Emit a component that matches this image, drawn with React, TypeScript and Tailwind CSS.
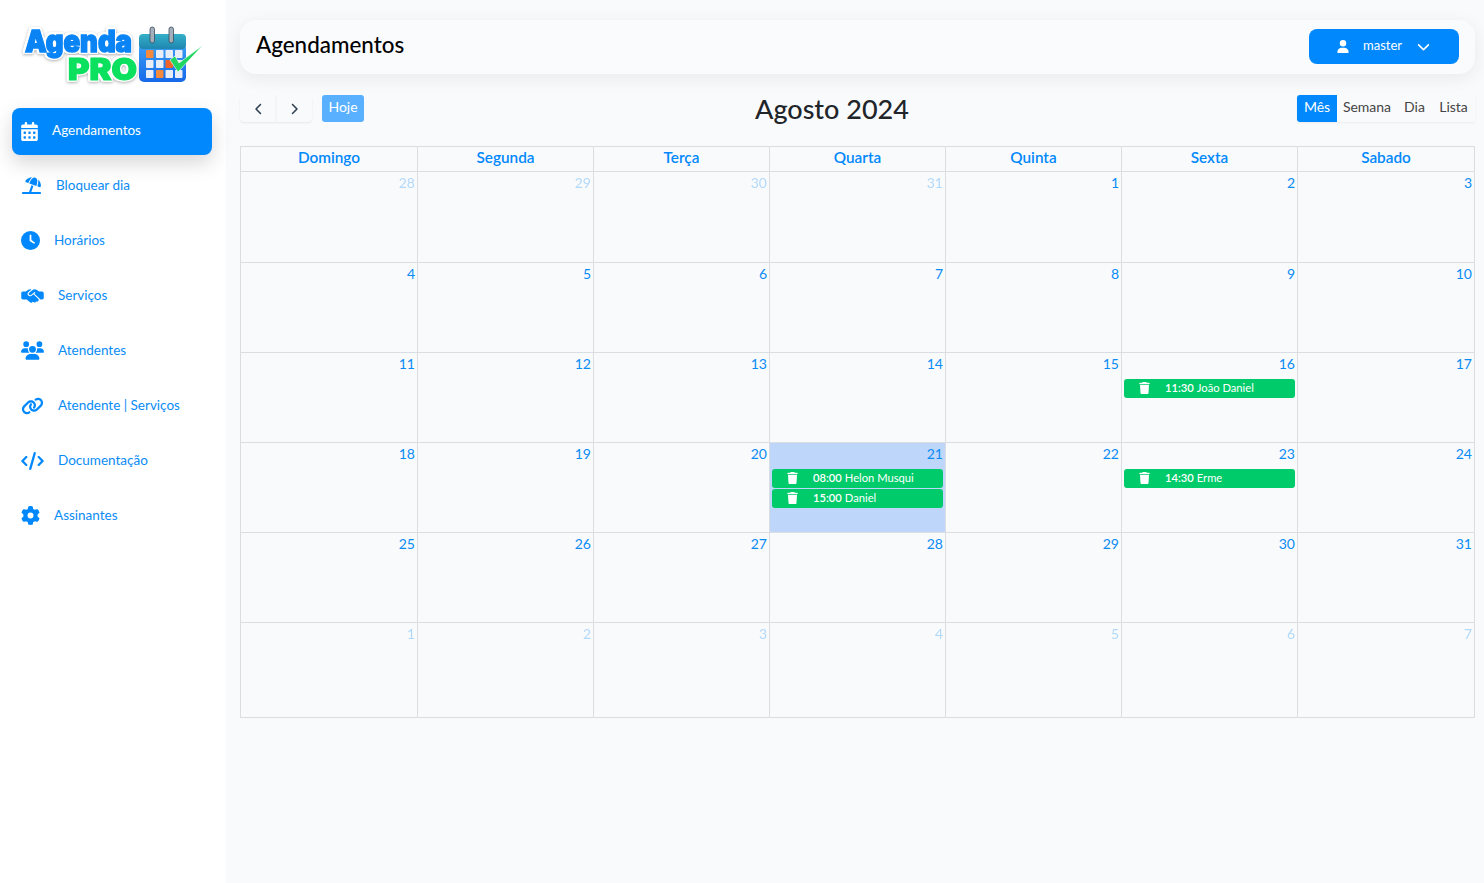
import type { ReactNode } from "react";
import {
  FaCalendarDays,
  FaUmbrellaBeach,
  FaClock,
  FaHandshakeSimple,
  FaUsers,
  FaLink,
  FaCode,
  FaGear,
  FaTrash,
  FaUser,
  FaChevronDown,
  FaChevronLeft,
  FaChevronRight,
} from "react-icons/fa6";

interface Agendamento {
  hora: string;
  nome: string;
}

interface Dia {
  n: number;
  fora?: boolean;
  hoje?: boolean;
  eventos?: Agendamento[];
}

const menu: { label: string; icon: ReactNode }[] = [
  { label: "Bloquear dia", icon: <FaUmbrellaBeach className="w-[21px] h-[17px]" /> },
  { label: "Horários", icon: <FaClock className="w-[19px] h-[19px]" /> },
  { label: "Serviços", icon: <FaHandshakeSimple className="w-[23px] h-[18px]" /> },
  { label: "Atendentes", icon: <FaUsers className="w-[23px] h-[19px]" /> },
  { label: "Atendente | Serviços", icon: <FaLink className="w-[23px] h-[18px]" /> },
  { label: "Documentação", icon: <FaCode className="w-[23px] h-[18px]" /> },
  { label: "Assinantes", icon: <FaGear className="w-[19px] h-[19px]" /> },
];

// larguras das colunas para bater com as linhas do calendario
const semana = [
  { nome: "Domingo", largura: "w-[177px]" },
  { nome: "Segunda", largura: "w-[176px]" },
  { nome: "Terça", largura: "w-[176px]" },
  { nome: "Quarta", largura: "w-[176px]" },
  { nome: "Quinta", largura: "w-[176px]" },
  { nome: "Sexta", largura: "w-[176px]" },
  { nome: "Sabado", largura: "w-[177px]" },
];

const d = (n: number, extra: Partial<Dia> = {}): Dia => ({ n, ...extra });

const linhas: { altura: string; dias: Dia[] }[] = [
  { altura: "h-[91px]", dias: [d(28, { fora: true }), d(29, { fora: true }), d(30, { fora: true }), d(31, { fora: true }), d(1), d(2), d(3)] },
  { altura: "h-[90px]", dias: [d(4), d(5), d(6), d(7), d(8), d(9), d(10)] },
  {
    altura: "h-[90px]",
    dias: [d(11), d(12), d(13), d(14), d(15), d(16, { eventos: [{ hora: "11:30", nome: "João Daniel" }] }), d(17)],
  },
  {
    altura: "h-[90px]",
    dias: [
      d(18),
      d(19),
      d(20),
      d(21, {
        hoje: true,
        eventos: [
          { hora: "08:00", nome: "Helon Musqui" },
          { hora: "15:00", nome: "Daniel" },
        ],
      }),
      d(22),
      d(23, { eventos: [{ hora: "14:30", nome: "Erme" }] }),
      d(24),
    ],
  },
  { altura: "h-[90px]", dias: [d(25), d(26), d(27), d(28), d(29), d(30), d(31)] },
  {
    altura: "h-[95px]",
    dias: [d(1, { fora: true }), d(2, { fora: true }), d(3, { fora: true }), d(4, { fora: true }), d(5, { fora: true }), d(6, { fora: true }), d(7, { fora: true })],
  },
];

const Logo = () => {
  const quadrados = [
    [146, 50, "#f58a3c"], [156, 50, "#e9edf5"], [165.5, 50, "#e9edf5"], [175, 50, "#e9edf5"],
    [146, 60, "#e9edf5"], [156, 60, "#e9edf5"], [165.5, 60, "#f0642c"], [175, 60, "#e9edf5"],
    [146, 70, "#e9edf5"], [156, 70, "#f58a3c"], [165.5, 70, "#e9edf5"], [175, 70, "#e9edf5"],
  ] as const;
  return (
    <svg width="226" height="108" viewBox="0 0 226 108" className="block">
      <defs>
        <linearGradient id="corpo" x1="0" y1="0" x2="0" y2="1">
          <stop offset="0" stopColor="#3aa0f5" />
          <stop offset="1" stopColor="#1668e8" />
        </linearGradient>
        <linearGradient id="topo" x1="0" y1="0" x2="0" y2="1">
          <stop offset="0" stopColor="#35b0c8" />
          <stop offset="1" stopColor="#1f86b0" />
        </linearGradient>
      </defs>
      <g className="[filter:drop-shadow(1.5px_0_0_#fff)_drop-shadow(-1.5px_0_0_#fff)_drop-shadow(0_1.5px_0_#fff)_drop-shadow(0_-1.5px_0_#fff)_drop-shadow(0_1px_1.5px_rgba(0,0,0,0.3))]">
        <text
          x="25"
          y="52"
          fontFamily="Inter, sans-serif"
          fontWeight="900"
          fontSize="30"
          textLength="107"
          lengthAdjust="spacingAndGlyphs"
          fill="#0a84f5"
          stroke="#0a84f5"
          strokeWidth="1.4"
        >
          Agenda
        </text>
        <text
          x="68"
          y="80"
          fontFamily="Inter, sans-serif"
          fontWeight="900"
          fontSize="30"
          textLength="69"
          lengthAdjust="spacingAndGlyphs"
          fill="#0be05f"
          stroke="#0be05f"
          strokeWidth="1.2"
        >
          PRO
        </text>
      </g>
      <rect x="139" y="44" width="47" height="38" rx="5" fill="url(#corpo)" />
      <rect x="139" y="34" width="47" height="15" rx="4" fill="url(#topo)" />
      {quadrados.map(([x, y, c]) => (
        <rect key={`${x}-${y}`} x={x} y={y} width="7.5" height="8" rx="0.8" fill={c} />
      ))}
      <rect x="150" y="27" width="4.5" height="16" rx="2.2" fill="#a3afbb" stroke="#3b4a5a" strokeWidth="0.8" />
      <rect x="169" y="27" width="4.5" height="16" rx="2.2" fill="#a3afbb" stroke="#3b4a5a" strokeWidth="0.8" />
      <path d="M170 60 L175 56 L179 63 L203 45 L178 72 Z" fill="#1ed760" stroke="#ffffff" strokeWidth="0.6" strokeLinejoin="round" />
    </svg>
  );
};

const Sidebar = () => (
  <aside className="w-[226px] shrink-0 bg-white">
    <Logo />
    <a className="mx-3 w-[200px] h-[47px] flex items-center pl-[9px] rounded-lg bg-[#0088fc] text-white text-[13.5px] shadow-[0_8px_20px_rgba(0,0,0,0.16)]">
      <FaCalendarDays className="w-[17px] h-[19px]" />
      <span className="ml-[14px] mb-[2px]">Agendamentos</span>
    </a>
    <ul className="mt-[3px] flex flex-col">
      {menu.map((item) => (
        <li key={item.label} className="h-[55px] flex items-center pl-[21px] text-[13.5px] text-[#0a8cf5]">
          <span className="text-[#0088fc] flex">{item.icon}</span>
          <span className="ml-[14px]">{item.label}</span>
        </li>
      ))}
    </ul>
  </aside>
);

const Evento = ({ e }: { e: Agendamento }) => (
  <div className="mx-[2px] mb-[1px] h-[19px] rounded-[3px] bg-[#00cb6a] text-white text-[11.2px] flex items-center pl-[15px]">
    <FaTrash className="w-[11px] h-[12px] shrink-0 mb-[2px]" />
    <span className="ml-[15px] font-semibold">{e.hora}</span>
    <span className="ml-[3px]">{e.nome}</span>
  </div>
);

const Calendario = () => (
  <table className="w-[1235px] table-fixed border-collapse border border-[#dadde2]">
    <thead>
      <tr className="h-[25px]">
        {semana.map((s) => (
          <th key={s.nome} className={`${s.largura} border border-[#dadde2] text-[15.3px] leading-[20px] font-semibold text-[#0088fc] p-0 pb-[4px]`}>
            {s.nome}
          </th>
        ))}
      </tr>
    </thead>
    <tbody>
      {linhas.map((linha, i) => (
        <tr key={i} className={linha.altura}>
          {linha.dias.map((dia, j) => (
            <td
              key={j}
              className={`border border-[#dadde2] align-top p-0 ${dia.hoje ? "bg-[#bfd6fb]" : ""}`}
            >
              <div className={`text-right text-[14px] leading-[18px] pr-[2px] pt-[2px] mb-[6px] text-[#0a8cf5] ${dia.fora ? "opacity-30" : ""}`}>
                {dia.n}
              </div>
              {dia.eventos?.map((e) => <Evento key={e.hora} e={e} />)}
            </td>
          ))}
        </tr>
      ))}
    </tbody>
  </table>
);

const Toolbar = () => (
  <div className="mt-[21px] mb-[24px] h-[27px] flex items-center justify-between relative">
    <div className="flex items-center">
      <button className="w-[36px] h-[27px] pl-px flex items-center justify-center text-[#2c3e50] shadow-[0_1px_2px_rgba(0,0,0,0.08)] rounded-l-sm">
        <FaChevronLeft className="w-[12px] h-[12px]" />
      </button>
      <button className="w-[36px] h-[27px] flex items-center justify-center text-[#2c3e50] shadow-[0_1px_2px_rgba(0,0,0,0.08)] rounded-r-sm">
        <FaChevronRight className="w-[12px] h-[12px]" />
      </button>
      <button className="ml-[10px] w-[42px] h-[27px] pb-[4px] rounded-[3px] bg-[#58b0ff] text-white text-[14px]">Hoje</button>
    </div>
    <h2 className="absolute left-[515px] top-[-3px] text-[27px] leading-[34px] font-medium text-[#212529]">Agosto 2024</h2>
    <div className="flex items-center text-[14px] text-[#444] shadow-[0_1px_2px_rgba(0,0,0,0.06)]">
      <span className="w-[40px] h-[27px] pb-[4px] flex items-center justify-center bg-[#0088fc] text-white rounded-l-[3px]">Mês</span>
      <span className="w-[60px] h-[27px] pb-[4px] flex items-center justify-center">Semana</span>
      <span className="w-[35px] h-[27px] pb-[4px] flex items-center justify-center">Dia</span>
      <span className="w-[43px] h-[27px] pb-[4px] flex items-center justify-center">Lista</span>
    </div>
  </div>
);

export default function App() {
  return (
    <div className="flex min-h-[883px] bg-[#f9fafc] font-['Lato',sans-serif]">
      <Sidebar />
      <main className="flex-1 min-w-0 pl-[14px] pr-[9px] pt-[20px]">
        <header className="h-[54px] rounded-2xl bg-[#fafbfd] shadow-[0_4px_18px_rgba(0,0,0,0.07)] flex items-center justify-between pl-4 pr-4">
          <h1 className="text-[22.4px] font-medium text-black mb-[4px]">Agendamentos</h1>
          <button className="w-[150px] h-[35px] mb-[2px] rounded-lg bg-[#0088fc] text-white text-[13px] flex items-center pl-[28px]">
            <FaUser className="w-[12px] h-[13px]" />
            <span className="ml-[14px] mb-px">master</span>
            <FaChevronDown className="ml-[15px] w-[13px] h-[13px]" />
          </button>
        </header>
        <Toolbar />
        <Calendario />
      </main>
    </div>
  );
}
